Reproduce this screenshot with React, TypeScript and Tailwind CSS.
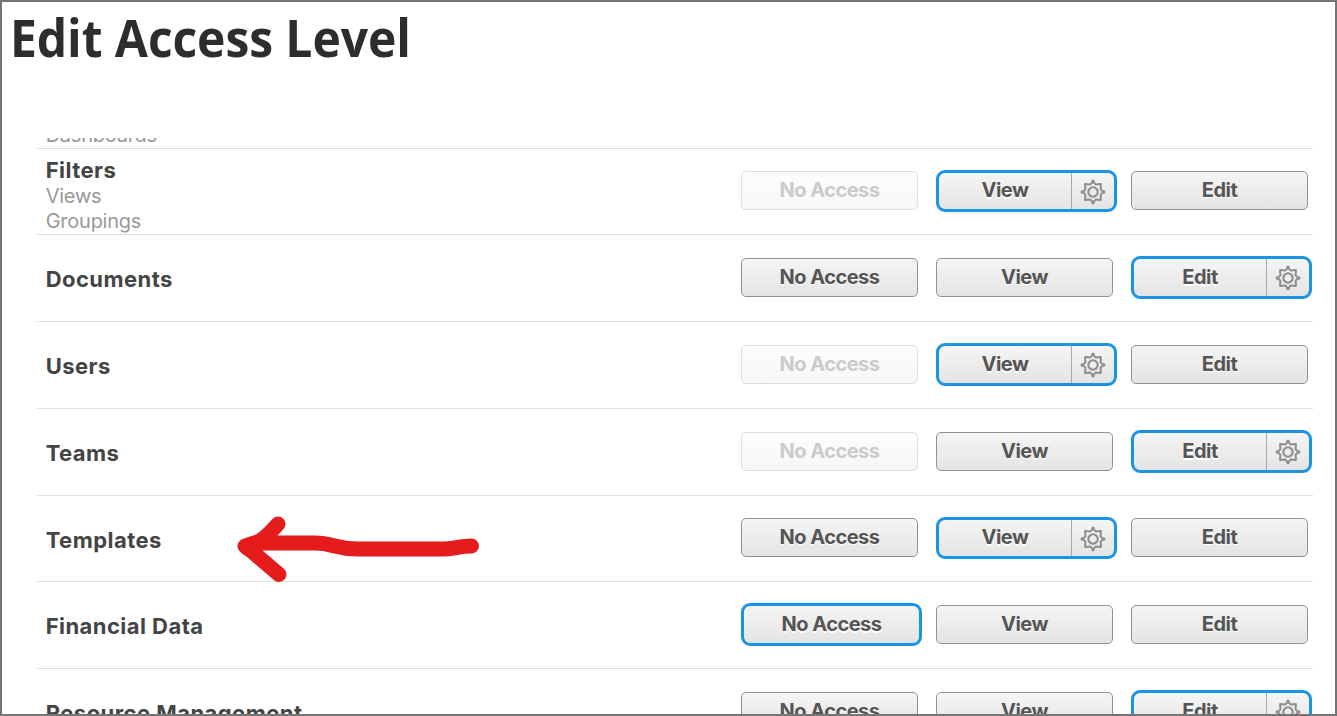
import { clsx } from 'clsx';

type Option = 'No Access' | 'View' | 'Edit';

type Row = {
  name: string;
  details?: string[];
  selected: Option;
  locked?: boolean;
  compact?: boolean;
};

const options: Option[] = ['No Access', 'View', 'Edit'];

const rows: Row[] = [
  { name: 'Filters', details: ['Views', 'Groupings'], selected: 'View', locked: true, compact: true },
  { name: 'Documents', selected: 'Edit' },
  { name: 'Users', selected: 'View', locked: true },
  { name: 'Teams', selected: 'Edit', locked: true },
  { name: 'Templates', selected: 'View', compact: true },
  { name: 'Financial Data', selected: 'No Access' },
  { name: 'Resource Management', selected: 'Edit' },
];

function GearIcon() {
  return (
    <svg width="26" height="26" viewBox="-13 -13 26 26" fill="none" stroke="#8e8e8e">
      <path
        d="M0-10.3 2.6-7.6 7.9-7.9 7.6-2.6 10.3 0 7.6 2.6 7.9 7.9 2.6 7.6 0 10.3-2.6 7.6-7.9 7.9-7.6 2.6-10.3 0-7.6-2.6-7.9-7.9-2.6-7.6Z"
        strokeWidth="2"
        strokeLinejoin="round"
      />
      <circle r="4.7" strokeWidth="2.1" />
      <path d="M0-10.8v.1M10.8 0h-.1M0 10.8v-.1M-10.8 0h.1" strokeWidth="3.4" strokeLinecap="round" />
    </svg>
  );
}

function AccessButton({ label, row }: { label: Option; row: Row }) {
  const selected = row.selected === label;
  const disabled = row.locked && label === 'No Access';

  if (selected) {
    return (
      <button
        className={clsx(
          'flex w-[181px] overflow-hidden rounded-[9px] border-3 border-[#1c94e4] bg-linear-to-b from-[#f5f5f5] to-[#e4e4e4]',
          row.compact ? '-mt-px h-[42px]' : '-mt-[2px] h-[43px]'
        )}
      >
        <span className={clsx('flex-1 text-center [text-shadow:0_2px_0_#fff]', row.compact ? 'pt-[3px]' : 'pt-[4px]')}>
          {label}
        </span>
        {label !== 'No Access' && (
          <span className="flex h-full w-[43px] items-center justify-center border-l border-[#a9a9a9] pt-px pr-px">
            <GearIcon />
          </span>
        )}
      </button>
    );
  }

  return (
    <button
      disabled={disabled}
      className={clsx(
        'flex h-[39px] w-[177px] justify-center rounded-[5px] border pt-[4px]',
        disabled
          ? 'border-[#dedede] bg-linear-to-b from-[#fdfdfd] to-[#f7f7f7] text-[#cbcbcb]'
          : 'border-[#929292] bg-linear-to-b from-[#f5f5f5] to-[#e4e4e4] [text-shadow:0_1px_0_#fff]'
      )}
    >
      {label}
    </button>
  );
}

function AccessRow({ row }: { row: Row }) {
  return (
    <div className={clsx('flex shrink-0 border-b border-[#dfdfdf]', row.compact ? 'h-[86px]' : 'h-[87px]')}>
      <div className={clsx('w-[704px] shrink-0 pl-[8.7px]', row.details ? 'pt-[8px]' : 'pt-[31px]')}>
        <h2 className="text-[22px] leading-[26px] font-bold tracking-[0.45px] whitespace-nowrap text-[#444]">{row.name}</h2>
        {row.details?.map((detail) => (
          <p key={detail} className="relative top-px text-[20px] leading-[25px] font-[375] tracking-[-0.25px] text-[#999]">
            {detail}
          </p>
        ))}
      </div>
      <div
        className={clsx(
          'flex items-start text-[20px] leading-[28px] font-[650] tracking-[-0.5px] text-[#555]',
          row.compact ? 'pt-[22px]' : 'pt-[23px]'
        )}
      >
        {options.map((option) => (
          <div key={option} className="w-[195px] shrink-0">
            <AccessButton label={option} row={row} />
          </div>
        ))}
      </div>
    </div>
  );
}

function Arrow() {
  return (
    <svg
      className="pointer-events-none absolute top-[508px] left-[228px]"
      width="260"
      height="80"
      fill="none"
      stroke="#e61b1b"
      strokeWidth="15"
      strokeLinecap="round"
      strokeLinejoin="round"
    >
      <path d="M241.500 36C229 36 224 39 213 39H128C105 39 103 33 85 33H28" />
      <path d="M48 14C42 20 40 24 30 31L15 36 25 44 49 64.500" />
      <path d="M17 38 34 32" />
    </svg>
  );
}

export default function App() {
  return (
    <div className="relative flex h-[716px] w-[1337px] flex-col overflow-hidden border-2 border-[#757575] bg-white font-[Inter,sans-serif]">
      <header className="h-[136px] shrink-0 pl-[8px]">
        <h1 className="origin-left scale-x-[0.915] font-['Open_Sans',sans-serif] text-[52.5px] leading-[70px] font-bold tracking-[-0.1px] whitespace-nowrap text-[#2d2d2d]">
          Edit Access Level
        </h1>
      </header>

      <main className="ml-[35px] flex w-[1276px] flex-1 flex-col overflow-hidden">
        <div className="flex h-[11px] shrink-0 items-end overflow-hidden border-b border-[#dfdfdf] pl-[8.7px]">
          <p className="text-[20px] leading-[25px] font-[375] tracking-[-0.25px] text-[#999]">Dashboards</p>
        </div>
        {rows.map((row) => (
          <AccessRow key={row.name} row={row} />
        ))}
      </main>

      <Arrow />
    </div>
  );
}
